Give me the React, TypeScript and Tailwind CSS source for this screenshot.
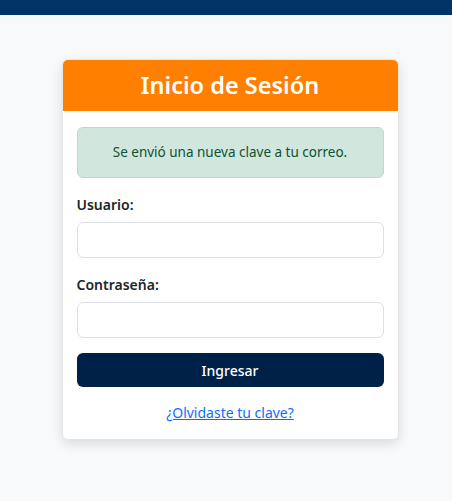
export default function App() {
  return (
    <div className="min-h-[501px] bg-[#f8f9fa] font-['Noto_Sans',sans-serif] text-[#212529]">
      <div className="h-[15px] bg-[#003366]" />
      <div className="flex justify-center pt-[44px] pl-[8px]">
        <div className="w-[337px] overflow-hidden rounded-md border border-[#e3e5e8] bg-white shadow-[0_4px_12px_rgba(0,0,0,0.12)]">
          <div className="flex h-[51px] items-center justify-center bg-[#ff8000]">
            <h1 className="text-[23.5px] font-semibold text-white">Inicio de Sesión</h1>
          </div>
          <div className="px-[14px] pt-4 pb-4">
            <div className="flex h-[51px] items-center justify-center rounded-md border border-[#badbcc] bg-[#d1e7dd] text-[13.5px] text-[#0f5132]">
              Se envió una nueva clave a tu correo.
            </div>
            <label className="mt-[17px] block text-[14px] leading-[20px] font-semibold">Usuario:</label>
            <input className="mt-[7px] h-[36px] w-full rounded-md border border-[#dee2e6] bg-white px-3 outline-none" />
            <label className="mt-[17px] block text-[14px] leading-[20px] font-semibold">Contraseña:</label>
            <input type="password" className="mt-[7px] h-[36px] w-full rounded-md border border-[#dee2e6] bg-white px-3 outline-none" />
            <button className="mt-[15px] h-[34px] w-full rounded-md bg-[#002147] text-[14px] font-medium text-white">
              Ingresar
            </button>
            <div className="mt-[15px] text-center leading-[20px]">
              <a href="#" className="text-[14px] text-[#0d6efd] underline">
                ¿Olvidaste tu clave?
              </a>
            </div>
          </div>
        </div>
      </div>
    </div>
  );
}
